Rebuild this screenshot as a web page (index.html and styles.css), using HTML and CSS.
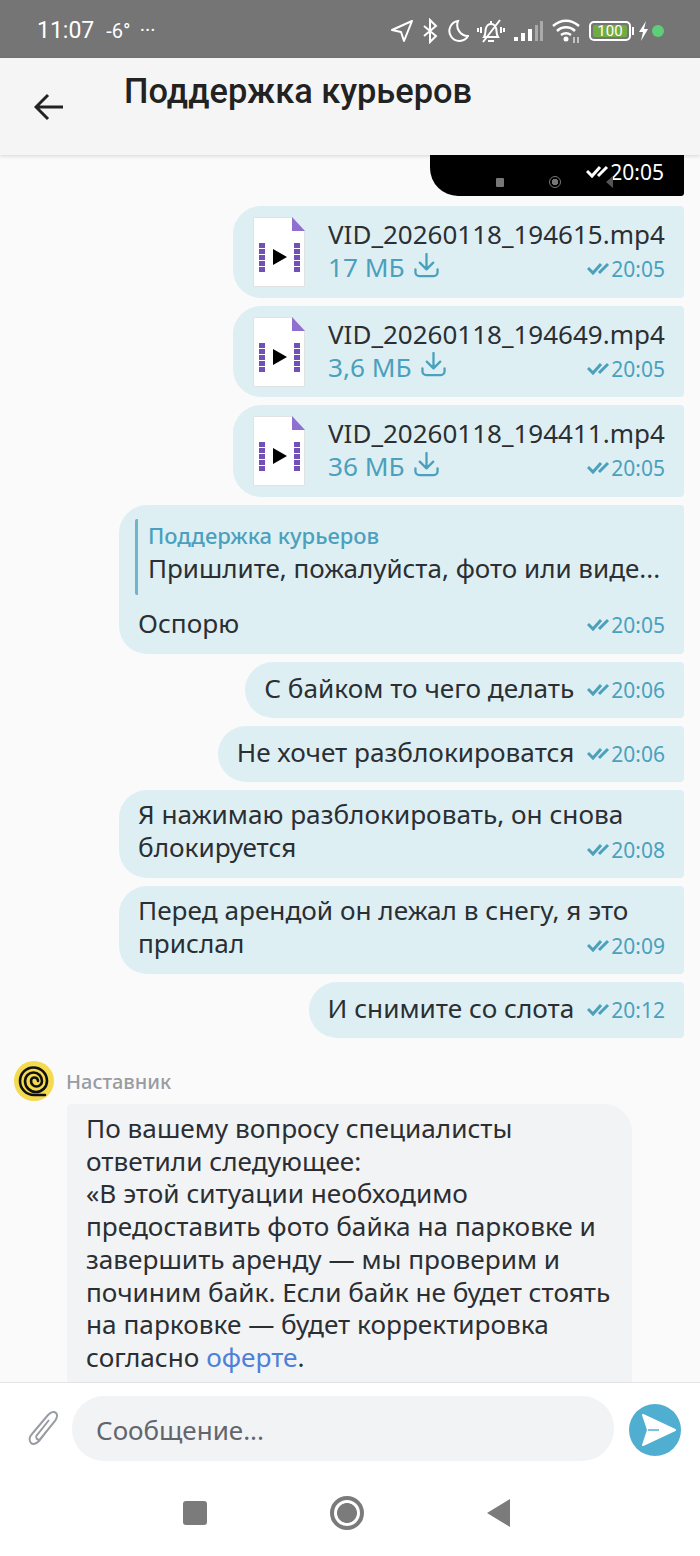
FILE: index.html
```html
<!DOCTYPE html>
<html lang="ru">
<head>
    <title>Поддержка курьеров</title>
    <meta charset="utf-8">
    <link rel="stylesheet" href="styles.css">
</head>
<body>
<svg class="defs" width="0" height="0">
    <symbol id="ticks" viewBox="0 0 24 14">
        <path d="M1 6l5 5 8-9M12 11l9-9" fill="none" stroke="currentColor" stroke-width="3"/>
    </symbol>
    <symbol id="file" viewBox="0 0 52 70">
        <path d="M.5.5H39L51.5 14V69.500H.5z" fill="#fff" stroke="#dfe3e6"/>
        <path d="M39 0L52 14H39z" fill="#8f6fd0"/>
        <path d="M6 26h6v5H6zM6 32h6v5H6zM6 38h6v5H6zM6 44h6v5H6zM6 50h6v5H6zM41 26h6v5h-6zM41 32h6v5h-6zM41 38h6v5h-6zM41 44h6v5h-6zM41 50h6v5h-6z" fill="#7350b8"/>
        <path d="M20 32l14 8-14 8z" fill="#000"/>
    </symbol>
    <symbol id="download" viewBox="0 0 26 26">
        <path d="M13 1v15M6 10l7 7 7-7M1.500 17v3a4 4 0 0 0 4 4h15a4 4 0 0 0 4-4v-3" fill="none" stroke="currentColor" stroke-width="2.400" stroke-linecap="round" stroke-linejoin="round"/>
    </symbol>
</svg>

<div class="screen">
    <div class="statusbar">
        <span class="clock">11:07</span>
        <span class="temp">-6°</span>
        <span class="dots">•••</span>
        <div class="status-icons">
            <svg width="24" height="24" viewBox="0 0 24 24"><path d="M22 2L2 11l9 2 3 9z" fill="none" stroke="#fff" stroke-width="2" stroke-linejoin="round"/></svg>
            <svg width="16" height="26" viewBox="0 0 16 26"><path d="M2 8l12 10-6 6V2l6 6L2 18" fill="none" stroke="#fff" stroke-width="2"/></svg>
            <svg width="23" height="24" viewBox="0 0 23 24"><path d="M12 2a10 10 0 1 0 10 15A11 11 0 0 1 12 2z" fill="none" stroke="#fff" stroke-width="2"/></svg>
            <svg width="28" height="26" viewBox="0 0 28 26"><path d="M7 19c2-3 1-6 2-9 1-3 3-4 5-4s4 1 5 4c1 3 0 6 2 9zM11 23h6M14 3v3M6 24L23 2M4 9v6M1 10v4M24 9v6M27 10v4" fill="none" stroke="#fff" stroke-width="2"/></svg>
            <svg width="31" height="22" viewBox="0 0 31 22"><path d="M1 17h4v4H1zM8 13h4v8H8zM15 9h4v12h-4z" fill="#fff"/><path d="M22 5h3v16h-3zM27 1h3v20h-3z" fill="#aaa"/></svg>
            <svg width="29" height="26" viewBox="0 0 29 26"><path d="M1 8c8-7 18-7 26 0M5 13c5-5 13-5 18 0M9 17c3-2 7-2 10 0" fill="none" stroke="#fff" stroke-width="2.500"/><circle cx="14" cy="21" r="2.500" fill="#fff"/><path d="M22 19v6M26 19v6" stroke="#ddd" stroke-width="1.500"/></svg>
            <div class="battery"><span class="battery-level">100</span></div>
            <svg class="bolt" width="11" height="20" viewBox="0 0 11 20"><path d="M8 0L1 11h4l-2 9 7-12H6z" fill="#fff"/></svg>
            <span class="green-dot"></span>
        </div>
    </div>

    <header class="topbar">
        <svg class="back" width="30" height="28" viewBox="0 0 30 28"><path d="M29 14H3M14 2L2 14l12 12" fill="none" stroke="#222" stroke-width="3"/></svg>
        <h1>Поддержка курьеров</h1>
    </header>

    <main class="chat">
        <div class="video-tail">
            <span class="mini-nav">
                <i class="mini-stop"></i>
                <i class="mini-home"></i>
                <i class="mini-back"></i>
            </span>
            <span class="meta meta-light"><svg class="ticks"><use href="#ticks"/></svg>20:05</span>
        </div>

        <div class="bubble file-bubble">
            <svg class="file-icon"><use href="#file"/></svg>
            <div class="file-info">
                <div class="file-name">VID_20260118_194615.mp4</div>
                <div class="file-row">
                    <span class="file-size">17 МБ <svg class="dl"><use href="#download"/></svg></span>
                    <span class="meta"><svg class="ticks"><use href="#ticks"/></svg>20:05</span>
                </div>
            </div>
        </div>
        <div class="bubble file-bubble">
            <svg class="file-icon"><use href="#file"/></svg>
            <div class="file-info">
                <div class="file-name">VID_20260118_194649.mp4</div>
                <div class="file-row">
                    <span class="file-size">3,6 МБ <svg class="dl"><use href="#download"/></svg></span>
                    <span class="meta"><svg class="ticks"><use href="#ticks"/></svg>20:05</span>
                </div>
            </div>
        </div>
        <div class="bubble file-bubble">
            <svg class="file-icon"><use href="#file"/></svg>
            <div class="file-info">
                <div class="file-name">VID_20260118_194411.mp4</div>
                <div class="file-row">
                    <span class="file-size">36 МБ <svg class="dl"><use href="#download"/></svg></span>
                    <span class="meta"><svg class="ticks"><use href="#ticks"/></svg>20:05</span>
                </div>
            </div>
        </div>

        <div class="bubble wide reply">
            <div class="quote">
                <div class="quote-name">Поддержка курьеров</div>
                <div class="quote-text">Пришлите, пожалуйста, фото или виде...</div>
            </div>
            <div class="row-end">
                <span>Оспорю</span>
                <span class="meta"><svg class="ticks"><use href="#ticks"/></svg>20:05</span>
            </div>
        </div>

        <div class="bubble line">
            <span>С байком то чего делать</span>
            <span class="meta"><svg class="ticks"><use href="#ticks"/></svg>20:06</span>
        </div>
        <div class="bubble line">
            <span>Не хочет разблокироватся</span>
            <span class="meta"><svg class="ticks"><use href="#ticks"/></svg>20:06</span>
        </div>
        <div class="bubble wide two-line">
            <div>Я нажимаю разблокировать, он снова</div>
            <div class="row-end">
                <span>блокируется</span>
                <span class="meta"><svg class="ticks"><use href="#ticks"/></svg>20:08</span>
            </div>
        </div>
        <div class="bubble wide two-line">
            <div>Перед арендой он лежал в снегу, я это</div>
            <div class="row-end">
                <span>прислал</span>
                <span class="meta"><svg class="ticks"><use href="#ticks"/></svg>20:09</span>
            </div>
        </div>
        <div class="bubble line">
            <span>И снимите со слота</span>
            <span class="meta"><svg class="ticks"><use href="#ticks"/></svg>20:12</span>
        </div>

        <div class="incoming">
            <div class="sender">
                <svg class="avatar" width="40" height="40" viewBox="0 0 40 40">
                    <circle cx="20" cy="20" r="20" fill="#f4da4e"/>
                    <path d="M24 20A3.500 3.500 0 0 0 17 20A5.500 5.500 0 0 0 28 20A8.500 8.500 0 0 0 11 20A11 11 0 0 0 33 20A13.500 13.500 0 0 0 6 20A14 14 0 0 0 20 34H31" fill="none" stroke="#111" stroke-width="2.600" stroke-linecap="round"/>
                </svg>
                <span class="sender-name">Наставник</span>
            </div>
            <div class="in-bubble">
                <div>По вашему вопросу специалисты ответили следующее:</div>
                <div>«В этой ситуации необходимо предоставить фото байка на парковке и завершить аренду — мы проверим и починим байк. Если байк не будет стоять на парковке — будет корректировка</div>
                <div>согласно <a href="#">оферте</a>.</div>
            </div>
        </div>
    </main>

    <div class="composer">
        <svg class="clip" width="34" height="38" viewBox="0 0 34 38"><path d="M28 12L13 31c-3 3-6 4-8 2s-2-6 1-9L22 5c3-3 6-4 8-2s1 5-1 8L15 28c-1 2-3 2-4 1s-1-3 0-4L23 10" fill="none" stroke="#999ca3" stroke-width="2"/></svg>
        <div class="input">Сообщение...</div>
        <svg class="send" width="52" height="52" viewBox="0 0 52 52"><circle cx="26" cy="26" r="26" fill="#50aed0"/><path d="M14 11l32 15-32 15 5-15z" fill="#fff" stroke="#fff" stroke-width="2" stroke-linejoin="round"/><path d="M19 26h11" stroke="#50aed0" stroke-width="1.500"/></svg>
    </div>

    <nav class="navbar">
        <i class="nav-stop"></i>
        <i class="nav-home"></i>
        <i class="nav-back"></i>
    </nav>
</div>
</body>
</html>
```

FILE: styles.css
```css
*{
    box-sizing: border-box;
}
body{
    margin: 0;
    font-family: 'Noto Sans', sans-serif;
    color: #2b2f33;
}
.defs{
    position: absolute;
}
.screen{
    width: 700px;
    height: 1556px;
    display: flex;
    flex-direction: column;
    overflow: hidden;
    background: #fff;
}
/* Status bar */
.statusbar{
    height: 58px;
    flex: none;
    background: #757575;
    color: #fff;
    display: flex;
    align-items: center;
    padding: 3px 36px 0 37px;
    font-family: Roboto, sans-serif;
}
.clock{
    font-size: 23px;
    margin-right: 12px;
}
.temp{
    font-size: 20px;
    margin-right: 10px;
}
.dots{
    font-size: 11px;
    letter-spacing: 1.500px;
}
.status-icons{
    margin-left: auto;
    display: flex;
    align-items: center;
    gap: 8px;
}
.battery{
    width: 42px;
    height: 20px;
    border: 2px solid #fff;
    border-radius: 5px;
    padding: 2px;
    position: relative;
}
.battery::after{
    content: "";
    position: absolute;
    right: -5px;
    top: 4px;
    width: 2px;
    height: 8px;
    background: #fff;
}
.battery-level{
    display: block;
    height: 100%;
    background: #72ab3f;
    border-radius: 2px;
    font-size: 15px;
    line-height: 12px;
    text-align: center;
}
.bolt{
    margin-left: -1px;
}
.green-dot{
    width: 12px;
    height: 12px;
    margin-left: -5px;
    border-radius: 50%;
    background: #5fce78;
}
/* Top bar */
.topbar{
    height: 97px;
    flex: none;
    background: #f5f5f5;
    box-shadow: 0 1px 4px rgba(0,0,0,0.15);
    display: flex;
    align-items: flex-start;
    position: relative;
    z-index: 2;
}
.back{
    margin: 35px 0 0 34px;
}
.topbar h1{
    margin: 12px 0 0 60px;
    font-family: Roboto, sans-serif;
    font-size: 34.400px;
    font-weight: 500;
    line-height: 42px;
    color: #222;
}
/* Messages */
.chat{
    flex: 1;
    min-height: 0;
    overflow: hidden;
    background: #fafafa;
    display: flex;
    flex-direction: column;
    align-items: flex-end;
    gap: 8px;
    padding-right: 16px;
    font-size: 26.200px;
    line-height: 33px;
}
.video-tail{
    width: 254px;
    height: 41px;
    background: #000;
    border-radius: 0 0 3px 28px;
    margin-bottom: 2px;
    display: flex;
    justify-content: flex-end;
    padding: 1px 20px 0 0;
    position: relative;
    flex: none;
}
.mini-nav{
    position: absolute;
    left: 66px;
    top: 21px;
    display: flex;
    align-items: center;
    gap: 45px;
}
.mini-stop{
    width: 8px;
    height: 9px;
    background: #777;
    border-radius: 1px;
}
.mini-home{
    width: 12px;
    height: 12px;
    border: 1.500px solid #777;
    border-radius: 50%;
    background: radial-gradient(#777 45%, transparent 50%);
}
.mini-back{
    width: 0;
    height: 0;
    border: 6px solid transparent;
    border-left: 0;
    border-right: 7px solid #555;
}
.bubble{
    background: #deeff4;
    border-radius: 28px 4px 4px 28px;
    flex: none;
}
.file-bubble{
    width: 451px;
    height: 91.700px;
    display: flex;
    padding: 11px 19px 0 20px;
}
.file-icon{
    width: 52px;
    height: 70px;
    flex: none;
}
.file-info{
    flex: 1;
    margin-left: 23px;
}
.file-name{
    font-size: 26px;
    line-height: 34px;
}
.file-row{
    display: flex;
    justify-content: space-between;
    align-items: center;
}
.file-row .meta{
    margin-top: 3px;
}
.file-size{
    color: #4ba0bd;
    display: flex;
    align-items: center;
    gap: 9px;
}
.dl{
    width: 25px;
    height: 25px;
    margin-top: -5px;
}
.meta{
    color: #4ba0bd;
    font-size: 21px;
    line-height: 28px;
    display: inline-flex;
    align-items: center;
    white-space: nowrap;
}
.meta-light{
    color: #fff;
    height: 32px;
}
.ticks{
    width: 24px;
    height: 14px;
}
.wide{
    width: 565px;
    padding: 0 19px;
}
.reply{
    height: 149px;
}
.quote{
    margin: 15px 0 0 -3px;
    border-left: 3px solid #6cb5cd;
    border-radius: 2px;
    padding-left: 10px;
    height: 76px;
}
.quote-name{
    margin-top: -1px;
    color: #4ba0bd;
    font-size: 22px;
    font-weight: 500;
    line-height: 32px;
}
.quote-text{
    font-size: 26px;
    line-height: 34px;
    white-space: nowrap;
}
.row-end{
    display: flex;
    justify-content: space-between;
    align-items: flex-end;
}
.quote + .row-end{
    margin-top: 12px;
}
.quote + .row-end .meta{
    margin-bottom: 1px;
}
.two-line{
    height: 88px;
    padding-top: 8px;
}
.line{
    height: 56px;
    padding: 0 19px 4px;
    display: flex;
    align-items: center;
    gap: 13px;
}
.line .meta{
    margin-top: 4px;
}
/* Incoming message */
.incoming{
    align-self: flex-start;
    margin: 15px 0 0 14px;
    flex: none;
}
.sender{
    display: flex;
    align-items: flex-end;
    height: 40px;
}
.avatar{
    flex: none;
}
.sender-name{
    margin: 0 0 5px 12px;
    color: #999ca3;
    font-size: 20px;
    font-weight: 500;
    line-height: 28px;
}
.in-bubble{
    width: 565px;
    margin: 3px 0 0 53px;
    background: #f2f3f5;
    border-radius: 4px 28px 0 0;
    padding: 8px 12px 40px 19px;
    line-height: 32.700px;
}
.in-bubble a{
    color: #4d80d8;
    text-decoration: none;
}
/* Composer */
.composer{
    height: 94px;
    flex: none;
    background: #fff;
    border-top: 1px solid #e4e4e6;
    display: flex;
    align-items: center;
    padding: 0 19px 2px 26px;
    position: relative;
    z-index: 2;
}
.clip{
    flex: none;
}
.input{
    width: 542px;
    height: 65px;
    margin-left: 12px;
    border-radius: 32px;
    background: #f2f3f5;
    color: #62666c;
    font-size: 26px;
    line-height: 68px;
    padding-left: 24px;
}
.send{
    margin: 2px 0 0 15px;
    flex: none;
}
.navbar{
    height: 80px;
    flex: none;
    background: #fff;
    display: flex;
    align-items: center;
    padding: 0 190px 6px 183px;
    justify-content: space-between;
}
.nav-stop{
    width: 24px;
    height: 24px;
    background: #7b7b7b;
    border-radius: 3px;
}
.nav-home{
    width: 34px;
    height: 34px;
    border: 4px solid #7b7b7b;
    border-radius: 50%;
    background: radial-gradient(#7b7b7b 52%, transparent 56%);
}
.nav-back{
    width: 0;
    height: 0;
    border: 14px solid transparent;
    border-left: 0;
    border-right: 23px solid #7b7b7b;
}
```
